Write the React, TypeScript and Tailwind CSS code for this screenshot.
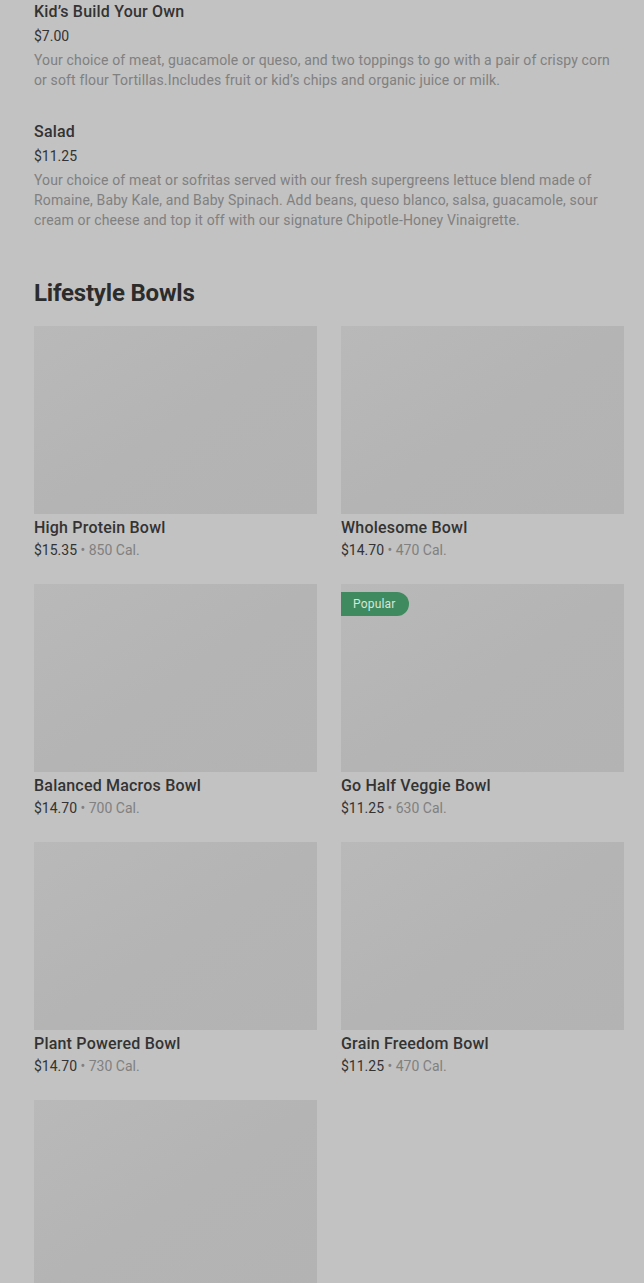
import React from "react";

const bowls = [
  { name: "High Protein Bowl", price: "$15.35", cal: "850 Cal." },
  { name: "Wholesome Bowl", price: "$14.70", cal: "470 Cal." },
  { name: "Balanced Macros Bowl", price: "$14.70", cal: "700 Cal." },
  { name: "Go Half Veggie Bowl", price: "$11.25", cal: "630 Cal.", popular: true },
  { name: "Plant Powered Bowl", price: "$14.70", cal: "730 Cal." },
  { name: "Grain Freedom Bowl", price: "$11.25", cal: "470 Cal." },
  { name: "", price: "", cal: "" },
];

export default function App() {
  return (
    <div
      className="min-h-[1283px] w-[644px] overflow-hidden bg-[#c2c2c2] pl-[34px] pr-[20px]"
      style={{ fontFamily: "Roboto, 'Liberation Sans', sans-serif" }}
    >
      <div className="flex flex-col">
        <div className="text-[16px] leading-[24px] font-medium tracking-[0.2px] text-[#333333]">Kid’s Build Your Own</div>
        <div className="mt-[2px] text-[14px] leading-[20px] text-[#333333]">$7.00</div>
        <div className="mt-[4px] text-[14px] leading-[20px] tracking-[0.14px] text-[#808080]">
          Your choice of meat, guacamole or queso, and two toppings to go with a pair of crispy corn or soft flour Tortillas.Includes fruit or kid’s chips and organic juice or milk.
        </div>

        <div className="mt-[30px] text-[16px] leading-[24px] font-medium tracking-[0.2px] text-[#333333]">Salad</div>
        <div className="mt-[2px] text-[14px] leading-[20px] text-[#333333]">$11.25</div>
        <div className="mt-[4px] text-[14px] leading-[20px] tracking-[0.14px] text-[#808080]">
          Your choice of meat or sofritas served with our fresh supergreens lettuce blend made of Romaine, Baby Kale, and Baby Spinach. Add beans, queso blanco, salsa, guacamole, sour cream or cheese and top it off with our signature Chipotle-Honey Vinaigrette.
        </div>

        <h2 className="mt-[47px] text-[24px] leading-[32px] font-bold tracking-[-0.2px] text-[#2c2c2c]">Lifestyle Bowls</h2>

        <div className="mt-[17px] grid grid-cols-[283px_283px] gap-x-[24px] gap-y-[24px]">
          {bowls.map((b, i) => (
            <div key={i} className="flex flex-col">
              <div className="relative h-[188px] w-full bg-[#b4b4b4] bg-gradient-to-br from-[#b9b9b9] via-[#b4b4b4] to-[#b3b3b3]">
                {b.popular && (
                  <div className="absolute left-0 top-[8px] flex h-[24px] items-center rounded-r-full bg-[#3f8a5f] pl-[12px] pr-[13px] text-[12px] leading-[16px] tracking-[0.2px] text-[#d6e6da]">
                    Popular
                  </div>
                )}
              </div>
              {b.name && (
                <>
                  <div className="mt-[2px] text-[16px] leading-[24px] font-medium tracking-[0.2px] text-[#333333]">{b.name}</div>
                  <div className="text-[14px] leading-[20px]">
                    <span className="text-[#333333]">{b.price}</span>
                    <span className="text-[#808080]"> • {b.cal}</span>
                  </div>
                </>
              )}
            </div>
          ))}
        </div>
      </div>
    </div>
  );
}
